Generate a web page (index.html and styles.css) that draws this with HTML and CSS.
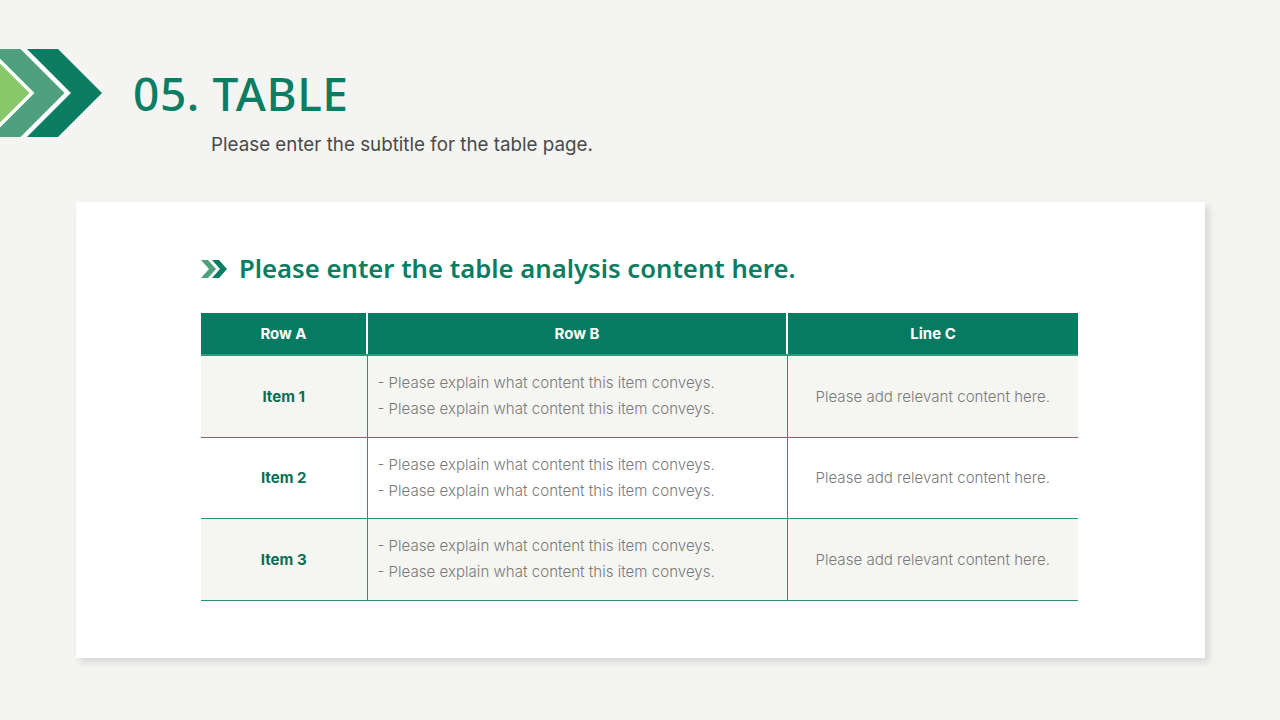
FILE: index.html
```html
<!DOCTYPE html>
<html>
<head>
<meta charset="utf-8">
<link rel="stylesheet" href="styles.css">
</head>
<body>
<div class="page">
  <header class="header">
    <svg class="logo" width="104" height="88" viewBox="0 0 104 88">
      <polygon points="27,0 58,0 102,44 58,88 27,88 71,44" fill="#0b7d62"/>
      <polygon points="-40,-10 13,-10 67,44 13,98 -40,98" fill="#4fa07c" stroke="#ffffff" stroke-width="3.5"/>
      <polygon points="-60,-10 -22,-10 32,44 -22,98 -60,98" fill="#86c86a" stroke="#ffffff" stroke-width="3.5"/>
    </svg>
    <div class="titles">
      <h1 class="title">05. TABLE</h1>
      <p class="subtitle">Please enter the subtitle for the table page.</p>
    </div>
  </header>
  <section class="card">
    <h2 class="card-title">
      <svg class="mini" width="28" height="18" viewBox="0 0 28 18">
        <polygon points="0,0 7,0 15,9 7,18 0,18 8,9" fill="#4fa07c"/>
        <polygon points="11,0 18,0 26,9 18,18 11,18 19,9" fill="#0b7d62"/>
      </svg>
      Please enter the table analysis content here.
    </h2>
    <table class="tbl">
      <colgroup>
        <col class="c1"><col class="c2"><col class="c3">
      </colgroup>
      <thead>
        <tr><th>Row A</th><th>Row B</th><th>Line C</th></tr>
      </thead>
      <tbody>
        <tr class="shade">
          <td class="item">Item 1</td>
          <td class="desc">- Please explain what content this item conveys.<br>- Please explain what content this item conveys.</td>
          <td class="note">Please add relevant content here.</td>
        </tr>
        <tr>
          <td class="item">Item 2</td>
          <td class="desc">- Please explain what content this item conveys.<br>- Please explain what content this item conveys.</td>
          <td class="note">Please add relevant content here.</td>
        </tr>
        <tr class="shade">
          <td class="item">Item 3</td>
          <td class="desc">- Please explain what content this item conveys.<br>- Please explain what content this item conveys.</td>
          <td class="note">Please add relevant content here.</td>
        </tr>
      </tbody>
    </table>
  </section>
</div>
</body>
</html>
```

FILE: styles.css
```css
html, body {
  margin: 0;
  padding: 0;
}
body {
  background: #f4f4f2;
  font-family: Inter, "Noto Sans", sans-serif;
  width: 1280px;
  height: 720px;
  overflow: hidden;
}
.page {
  padding-top: 49px;
}
.header {
  display: flex;
  align-items: flex-start;
  height: 153px;
}
.logo {
  display: block;
  flex: none;
}
.titles {
  margin-left: 29px;
}
.title {
  margin: 0;
  padding-top: 21px;
  font-family: "Noto Sans", sans-serif;
  font-weight: 500;
  font-size: 46px;
  line-height: 46px;
  color: #0b7d62;
  letter-spacing: 0.6px;
}
.subtitle {
  margin: 17px 0 0 78px;
  font-size: 18.8px;
  line-height: 24px;
  color: #4a4a4a;
}
.card {
  margin-left: 76px;
  width: 1129px;
  height: 456px;
  box-sizing: border-box;
  background: #ffffff;
  box-shadow: 4px 4px 7px rgba(0,0,0,0.12);
  padding: 51px 0 0 125px;
}
.card-title {
  display: flex;
  align-items: center;
  margin: 0 0 28px 0;
  font-family: "Noto Sans", sans-serif;
  font-weight: 600;
  font-size: 25.7px;
  line-height: 32px;
  color: #0b7d62;
}
.mini {
  margin-right: 10px;
}
.tbl {
  border-collapse: collapse;
  width: 877px;
  table-layout: fixed;
}
.c1 { width: 166px; }
.c2 { width: 420px; }
.c3 { width: 291px; }
.tbl th {
  background: #077b62;
  color: #ffffff;
  font-weight: 700;
  font-size: 15px;
  height: 41px;
  padding: 0;
  border-left: 2px solid #ffffff;
  border-bottom: 2px solid #2f9a78;
}
.tbl th:first-child {
  border-left: none;
}
.tbl td {
  height: 80.5px;
  padding: 0;
  border-bottom: 1.5px solid #2a9070;
  border-left: 1.5px solid #2a9070;
  font-size: 15.1px;
  vertical-align: middle;
}
.tbl td:first-child {
  border-left: none;
}
.shade td {
  background: #f5f5f2;
}
.item {
  text-align: center;
  font-weight: 700;
  color: #0b6e55;
}
.desc {
  padding-left: 10px !important;
  color: #7a7a7a;
  line-height: 26px;
  font-weight: 300;
}
.note {
  text-align: center;
  color: #7a7a7a;
  font-weight: 300;
}
```
